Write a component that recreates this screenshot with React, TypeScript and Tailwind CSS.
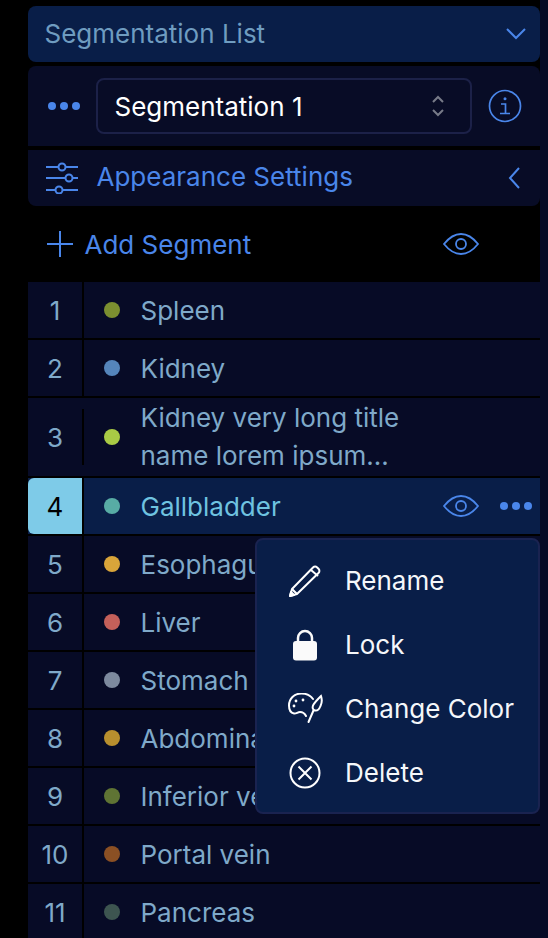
import React from "react";

type Segment = {
  id: number;
  name: React.ReactNode;
  color: string;
};

const segments: Segment[] = [
  { id: 1, name: "Spleen", color: "bg-[#7b8f30]" },
  { id: 2, name: "Kidney", color: "bg-[#5585bb]" },
  {
    id: 3,
    name: (
      <>
        Kidney very long title
        <br />
        name lorem ipsum...
      </>
    ),
    color: "bg-[#a9cb45]",
  },
  { id: 4, name: "Gallbladder", color: "bg-[#58aca5]" },
  { id: 5, name: "Esophagus", color: "bg-[#d9a53a]" },
  { id: 6, name: "Liver", color: "bg-[#c4605a]" },
  { id: 7, name: "Stomach", color: "bg-[#7d8a9e]" },
  { id: 8, name: "Abdominal aorta", color: "bg-[#b88f2e]" },
  { id: 9, name: "Inferior vena cava", color: "bg-[#5f7434]" },
  { id: 10, name: "Portal vein", color: "bg-[#8b5024]" },
  { id: 11, name: "Pancreas", color: "bg-[#3d5550]" },
];

const EyeIcon = () => (
  <svg width="36" height="22" viewBox="0 0 36 22" fill="none" stroke="#4a86ea" strokeWidth="1.800">
    <path d="M1 11C7 3.500 12.500 1 18 1s11 2.500 17 10c-6 7.500-11.500 10-17 10S7 18.500 1 11Z" />
    <circle cx="18" cy="11" r="5" />
  </svg>
);

const Dots = () => (
  <div className="flex gap-[4px]">
    <span className="w-[8px] h-[8px] rounded-full bg-[#4a86ea]" />
    <span className="w-[8px] h-[8px] rounded-full bg-[#4a86ea]" />
    <span className="w-[8px] h-[8px] rounded-full bg-[#4a86ea]" />
  </div>
);

const PencilIcon = () => (
  <svg width="34" height="34" viewBox="0 0 34 34" fill="none" stroke="#fff" strokeWidth="2" strokeLinejoin="round">
    <path d="M9 30 2 32l2-7L25 3.500c1.200-1.200 3-1.200 4.200 0l1.300 1.300c1.200 1.200 1.200 3 0 4.200Z" />
    <path d="m4 25 5 5M23 6l7 6" />
    <path d="M2 32l1-4 3 3Z" fill="#fff" />
  </svg>
);

const LockIcon = () => (
  <svg width="26" height="32" viewBox="0 0 26 32" fill="none">
    <path d="M6 13V9a7 7 0 0 1 14 0v4" stroke="#fafafa" strokeWidth="2.500" />
    <rect x="1" y="12" width="24" height="19.500" rx="3" fill="#fafafa" />
  </svg>
);

const PaletteIcon = () => (
  <svg width="36" height="32" viewBox="-1 1 36 32" fill="none" stroke="#fff" strokeWidth="2" strokeLinecap="round">
    <path d="M25 7C22 3 17 1.500 13.500 1.500 6 1.500 1 7 1 13.500 1 18 3 21 6 21.500c2.500.3 3.500-1.500 6-1.500s4.500 1 6 4" />
    <path d="M25.500 18.500 20.500 30" />
    <path d="M27 18.500c-2.500-.5-3-3.500-1.500-6 1.500-2.500 4.500-5.500 7.500-8.500 1 3 1 7-.5 10-1 2.500-3 5-5.500 4.500Z" />
    <circle cx="8" cy="9" r="1.400" fill="#fff" stroke="none" />
    <circle cx="15" cy="8" r="1.400" fill="#fff" stroke="none" />
    <circle cx="6" cy="14" r="1.400" fill="#fff" stroke="none" />
  </svg>
);

const DeleteIcon = () => (
  <svg width="32" height="32" viewBox="0 0 32 32" fill="none" stroke="#fff" strokeWidth="2">
    <circle cx="16" cy="16" r="14.500" />
    <path d="m9.500 9.500 13 13M22.500 9.500l-13 13" />
  </svg>
);

const menuItems = [
  { label: "Rename", icon: <PencilIcon /> },
  { label: "Lock", icon: <LockIcon /> },
  { label: "Change Color", icon: <PaletteIcon /> },
  { label: "Delete", icon: <DeleteIcon /> },
];

const SegmentRow = ({ segment }: { segment: Segment }) => {
  const isActive = segment.id === 4;
  const isLong = segment.id === 3;

  return (
    <div className={`flex ${isLong ? "h-[78px]" : "h-[56px]"} ${isActive ? "bg-[#091e48]" : "bg-[#070b26]"}`}>
      <div
        className={`w-[54px] flex items-center justify-center ${
          isActive ? "bg-[#7ecbe8] text-black rounded-l-[6px]" : "text-[#7fa9c9]"
        }`}
      >
        {segment.id}
      </div>
      <div className="w-[2px] flex items-center">
        <div className="w-[2px] h-[56px] bg-black" />
      </div>
      <div className="flex-1 flex items-center pl-[20px] min-w-0">
        <span className={`w-[16px] h-[16px] rounded-full shrink-0 ${segment.color}`} />
        <div
          className={`ml-[20.500px] leading-[38px] whitespace-nowrap ${isLong ? "" : "pt-[2px]"} ${
            isActive ? "text-[#6fc3e0]" : "text-[#7fa9c9]"
          }`}
        >
          {segment.name}
        </div>
        {isActive && (
          <div className="ml-auto flex items-center gap-[21px] pr-[8px]">
            <EyeIcon />
            <Dots />
          </div>
        )}
      </div>
    </div>
  );
};

export default function App() {
  return (
    <div className="h-[938px] w-[548px] flex overflow-hidden bg-black text-[26px] font-['Inter',sans-serif]">
      <div className="w-[28px] shrink-0" />
      <div className="w-[512px] shrink-0 relative pt-[6px] flex flex-col">
        <div className="h-[56px] shrink-0 bg-[#091e48] rounded-[8px] flex items-center justify-between pl-[16.500px] pr-[14px] text-[#6f9cc0]">
          <span className="pb-[2px]">Segmentation List</span>
          <svg width="20" height="12" viewBox="0 0 20 12" fill="none" stroke="#4a86ea" strokeWidth="2">
            <path d="m1 1 9 9 9-9" />
          </svg>
        </div>

        <div className="h-[80px] shrink-0 mt-[4px] bg-[#080c26] rounded-t-[8px] flex items-center pl-[20px] pr-[18px]">
          <Dots />
          <div className="ml-[16px] w-[376px] h-[56px] border-2 border-[#1c2148] rounded-[8px] flex items-center justify-between pl-[16.500px] pr-[25px] text-white">
            <span>Segmentation 1</span>
            <svg width="14" height="22" viewBox="0 0 14 22" fill="none" stroke="#777b88" strokeWidth="2">
              <path d="m2 7 5-5 5 5M2 15l5 5 5-5" />
            </svg>
          </div>
          <svg className="ml-auto" width="34" height="34" viewBox="0 0 34 34" fill="none" stroke="#4a86ea" strokeWidth="1.700">
            <circle cx="17" cy="17" r="15.500" />
            <path d="M13 15h4.500v9.500M12 24.500h10" />
            <circle cx="17" cy="9.700" r="1.500" fill="#4a86ea" stroke="none" />
          </svg>
        </div>

        <div className="h-[56px] shrink-0 mt-[4px] bg-[#080c26] rounded-b-[8px] flex items-center pl-[18px] pr-[20px] text-[#4a86ea]">
          <svg width="32" height="32" viewBox="0 0 32 32" fill="none" stroke="#4a86ea" strokeWidth="2">
            <path d="M0 5h12M20 5h12M0 16h19M27 16h5M0 28h9M17 28h15" />
            <circle cx="16" cy="5" r="3.500" />
            <circle cx="23" cy="16" r="3.500" />
            <circle cx="13" cy="28" r="3.500" />
          </svg>
          <span className="ml-[18.500px] pb-[4px]">Appearance Settings</span>
          <svg className="ml-auto" width="12" height="22" viewBox="0 0 12 22" fill="none" stroke="#4a86ea" strokeWidth="2">
            <path d="M11 1 2 11l9 10" />
          </svg>
        </div>

        <div className="h-[76px] shrink-0 flex items-center pl-[19px] text-[#4a86ea]">
          <svg width="26" height="26" viewBox="0 0 26 26" fill="none" stroke="#4a86ea" strokeWidth="2">
            <path d="M13 0v26M0 13h26" />
          </svg>
          <span className="ml-[11.500px]">Add Segment</span>
          <div className="ml-[191.500px] flex">
            <EyeIcon />
          </div>
        </div>

        <div className="flex flex-col gap-[2px]">
          {segments.map((segment) => (
            <SegmentRow key={segment.id} segment={segment} />
          ))}
        </div>

        <div className="absolute left-[227px] top-[538px] w-[285px] h-[276px] pt-[2px] bg-[#091e48] border-2 border-[#1a2350] rounded-[8px] flex flex-col justify-center text-[#f5f7fa]">
          {menuItems.map((item) => (
            <div key={item.label} className="h-[64px] flex items-center">
              <div className="w-[88px] pl-[8px] flex justify-center shrink-0">{item.icon}</div>
              <span className="pb-[2px]">{item.label}</span>
            </div>
          ))}
        </div>
      </div>
      <div className="flex-1 bg-[#060a26]" />
    </div>
  );
}
